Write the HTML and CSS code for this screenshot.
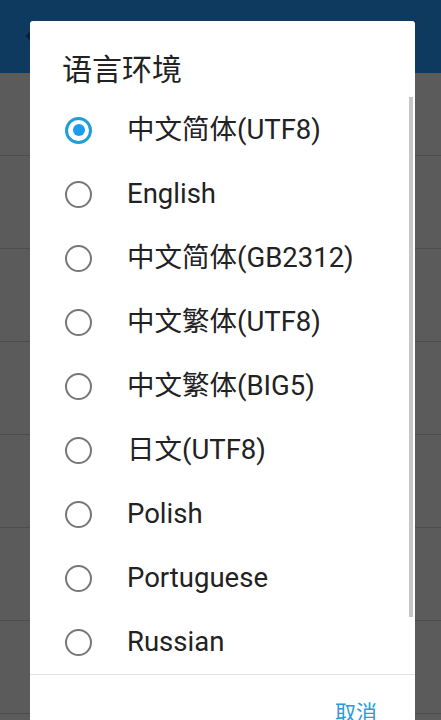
FILE: index.html
```html
<!DOCTYPE html>
<html lang="zh-CN">
<head>
<meta charset="utf-8">
<title>语言环境</title>
<link rel="stylesheet" href="styles.css">
</head>
<body>
<div class="screen">
  <header class="appbar">
    <svg class="back" width="20" height="20" viewBox="0 0 20 20"><path d="M18 10H4M10 3L3 10l7 7" fill="none" stroke="#0a2236" stroke-width="2.4"/></svg>
  </header>
  <div class="bglist">
    <div class="bgrow first"></div>
    <div class="bgrow"></div>
    <div class="bgrow"></div>
    <div class="bgrow"></div>
    <div class="bgrow"></div>
    <div class="bgrow"></div>
    <div class="bgrow"></div>
  </div>

  <div class="dialog">
    <h1 class="title">语言环境</h1>
    <div class="list">
      <div class="item"><span class="radio on"></span><span class="label">中文简体(UTF8)</span></div>
      <div class="item"><span class="radio"></span><span class="label">English</span></div>
      <div class="item"><span class="radio"></span><span class="label">中文简体(GB2312)</span></div>
      <div class="item"><span class="radio"></span><span class="label">中文繁体(UTF8)</span></div>
      <div class="item"><span class="radio"></span><span class="label">中文繁体(BIG5)</span></div>
      <div class="item"><span class="radio"></span><span class="label">日文(UTF8)</span></div>
      <div class="item"><span class="radio"></span><span class="label">Polish</span></div>
      <div class="item"><span class="radio"></span><span class="label">Portuguese</span></div>
      <div class="item"><span class="radio"></span><span class="label">Russian</span></div>
      <div class="scrollbar"></div>
    </div>
    <div class="actions"><span class="btn">取消</span></div>
  </div>
</div>
</body>
</html>
```

FILE: styles.css
```css
html, body {
  margin: 0;
  padding: 0;
}
body {
  background: #5b5b5b;
  font-family: Roboto, "Noto Sans CJK SC", sans-serif;
  overflow: hidden;
}
.screen {
  position: relative;
  width: 441px;
  height: 720px;
  overflow: hidden;
}
.appbar {
  height: 73px;
  background: #0f3a60;
  display: flex;
  align-items: center;
  padding-left: 24px;
}
.back {
  margin-top: -2px;
}
.bglist {
  display: flex;
  flex-direction: column;
}
.bgrow {
  height: 92px;
  border-bottom: 1px solid #4c4c4c;
}
.bgrow.first {
  height: 82px;
}
.dialog {
  position: absolute;
  left: 30px;
  top: 21px;
  width: 385px;
  height: 720px;
  background: #ffffff;
  border-radius: 3px;
  display: flex;
  flex-direction: column;
}
.title {
  margin: 0;
  padding: 31px 0 10px 32px;
  height: 36px;
  line-height: 36px;
  font-size: 30px;
  font-weight: 400;
  color: #222222;
}
.list {
  position: relative;
  border-bottom: 1px solid #e3e3e3;
}
.item {
  height: 64px;
  display: flex;
  align-items: center;
}
.radio {
  box-sizing: border-box;
  width: 27px;
  height: 27px;
  margin-left: 35px;
  border: 2.6px solid #777777;
  border-radius: 50%;
  display: flex;
  align-items: center;
  justify-content: center;
}
.radio.on {
  border-color: #1e9fdb;
  border-width: 3px;
}
.radio.on::after {
  content: "";
  width: 12px;
  height: 12px;
  border-radius: 50%;
  background: #1a9cf0;
}
.label {
  margin-left: 35px;
  font-size: 27.5px;
  color: #222222;
  line-height: 30px;
}
.scrollbar {
  position: absolute;
  right: 2px;
  top: -1px;
  width: 4px;
  height: 520px;
  background: #c6c6c6;
}
.actions {
  display: flex;
  justify-content: flex-end;
  padding: 24px 38px 0 0;
}
.btn {
  font-size: 21px;
  color: #2b9ad6;
  line-height: 28px;
}
```
